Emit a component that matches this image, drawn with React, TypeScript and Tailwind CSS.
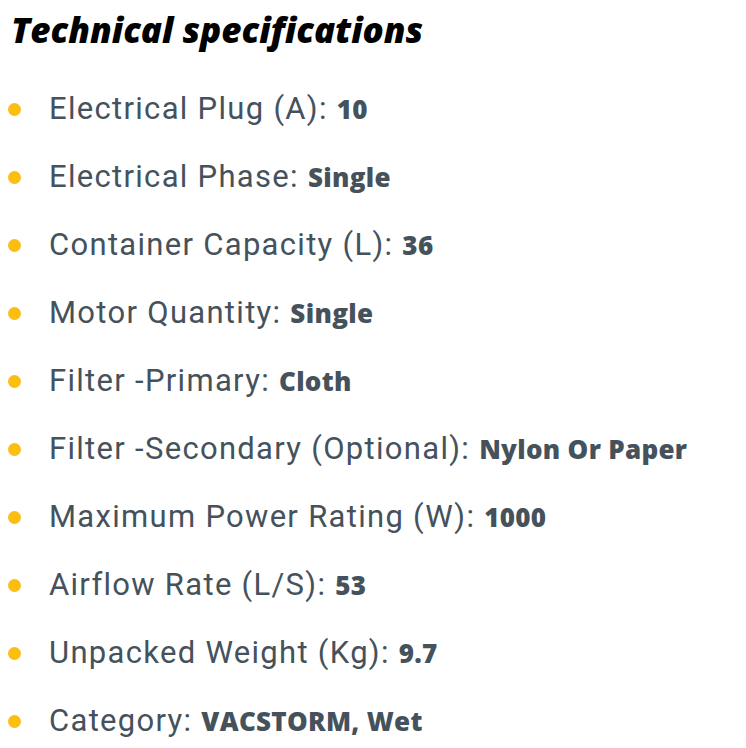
import React from "react";

const specs: [string, string][] = [
  ["Electrical Plug (A):", "10"],
  ["Electrical Phase:", "Single"],
  ["Container Capacity (L):", "36"],
  ["Motor Quantity:", "Single"],
  ["Filter -Primary:", "Cloth"],
  ["Filter -Secondary (Optional):", "Nylon Or Paper"],
  ["Maximum Power Rating (W):", "1000"],
  ["Airflow Rate (L/S):", "53"],
  ["Unpacked Weight (Kg):", "9.7"],
  ["Category:", "VACSTORM, Wet"],
];

export default function App() {
  return (
    <div className="w-[746px] h-[748px] bg-white overflow-hidden font-['Roboto',sans-serif]">
      <h2 className="pl-[11px] pt-[8px] text-[35px] leading-[44px] font-extrabold italic text-black font-['Open_Sans',sans-serif] tracking-[0px]">
        Technical specifications
      </h2>
      <ul className="mt-[41px] flex flex-col gap-[36px]">
        {specs.map(([k, v]) => (
          <li key={k} className="flex items-center h-[32px]">
            <span className="ml-[8px] w-[13px] h-[13px] rounded-full bg-[#fcbe11] shrink-0" />
            <span className="ml-[28px] text-[31px] leading-[32px] text-[#45525c] whitespace-nowrap tracking-[1.3px]">
              {k}{" "}
              <b className="text-[26px] font-extrabold font-['Open_Sans',sans-serif] tracking-[0.3px]">{v}</b>
            </span>
          </li>
        ))}
      </ul>
    </div>
  );
}
